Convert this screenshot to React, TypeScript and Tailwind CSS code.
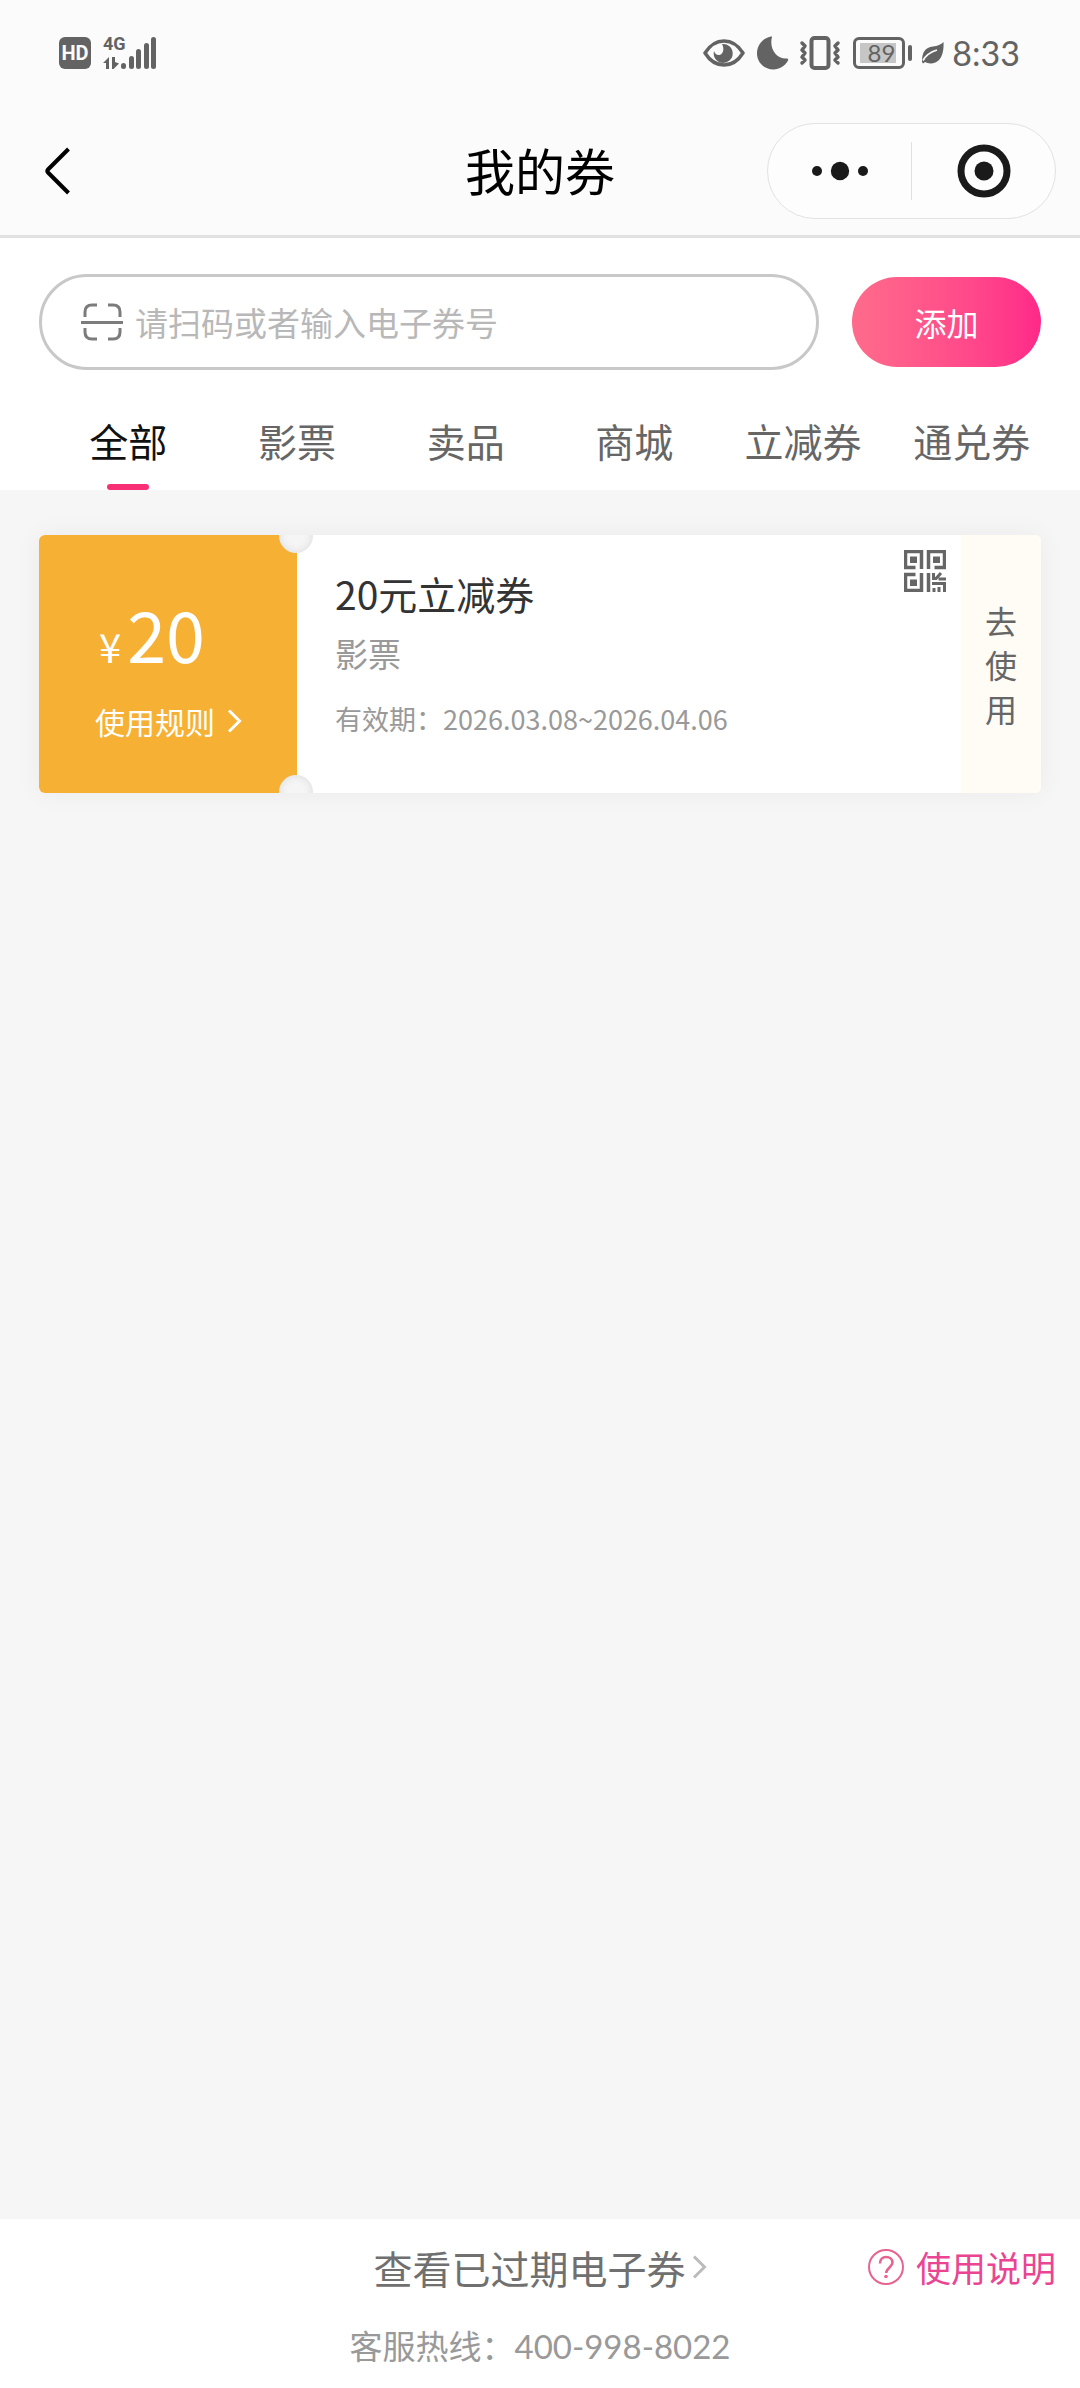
import React, { useState } from "react";

interface Coupon {
  id: number;
  amount: number;
  title: string;
  category: string;
  start: string;
  end: string;
}

const TABS = ["全部", "影票", "卖品", "商城", "立减券", "通兑券"];

const COUPONS: Coupon[] = [
  {
    id: 1,
    amount: 20,
    title: "20元立减券",
    category: "影票",
    start: "2026.03.08",
    end: "2026.04.06",
  },
];

const SignalIcon = () => (
  <svg width="54" height="34" viewBox="0 0 54 34" fill="#636363">
    <path d="M0 27 6 21v12H3v-6zM9 21h3v5l4 1.500-5.500 5.500H9z" />
    <rect x="18" y="27" width="5" height="6" rx="2.500" />
    <rect x="26" y="20" width="5" height="13" rx="2.500" />
    <rect x="33" y="13" width="5" height="20" rx="2.500" />
    <rect x="41" y="7" width="5" height="26" rx="2.500" />
    <rect x="48" y="1" width="5" height="32" rx="2.500" />
  </svg>
);

const EyeIcon = () => (
  <svg width="42" height="28" viewBox="0 0 42 28" fill="none">
    <path
      d="M2 14C7 6 13.500 2 21 2s14 4 19 12c-5 8-11.500 12-19 12S7 22 2 14z"
      stroke="#636363"
      strokeWidth="3.500"
      strokeLinejoin="round"
    />
    <path
      d="M19 5a9.500 9.500 0 1 1-8 7c1 3 3 4.500 5.500 4 4-.8 5-6.500 2.500-11z"
      fill="#636363"
    />
  </svg>
);

const MoonIcon = () => (
  <svg width="32" height="34" viewBox="0 0 32 34" fill="#636363">
    <path d="M15 1C12 12 19 23 29.500 22.500c1.500 0 2 .8 1.500 2C28 30 22.500 33.500 16.500 33.500 7.500 33.500 0 26.500 0 17.500 0 9 6 2 14 .5c.8-.1 1.200 0 1 .5z" />
  </svg>
);

const VibrateIcon = () => (
  <svg
    width="42"
    height="34"
    viewBox="0 0 42 34"
    fill="none"
    stroke="#636363"
    strokeLinejoin="round"
    strokeLinecap="round"
  >
    <rect x="12.500" y="2" width="17" height="30" rx="3" strokeWidth="4" />
    <path
      d="m3 7 3 3-3 4 3 3-3 4 3 3-3 3M39 7l-3 3 3 4-3 3 3 4-3 3 3 3"
      strokeWidth="3.500"
    />
  </svg>
);

const LeafIcon = () => (
  <svg width="22" height="22" viewBox="0 0 22 22">
    <path
      d="M21.500 0c.5 8-1 21-12.500 21.500-2.500.1-4.500-.8-6-1.500L1 21.500 0 20C0 10 3 5.500 11 4.500 15.500 4 19 2.500 21.500 0z"
      fill="#636363"
    />
    <path
      d="M1 18.500C4 13 8.500 10 15 8"
      stroke="#fbfbfb"
      strokeWidth="1.800"
      fill="none"
    />
  </svg>
);

const ScanIcon = () => (
  <svg
    width="42"
    height="38"
    viewBox="0 0 42 38"
    fill="none"
    stroke="#7c7c7c"
    strokeWidth="3"
  >
    <path d="M4 14V9q0-7 7-7h5M27 2h5q7 0 7 7v5M4 25v4q0 7 7 7h5M27 36h5q7 0 7-7v-4M0 19.500h42" />
  </svg>
);

const QrIcon = () => (
  <svg width="42" height="42" viewBox="0 0 42 42" fill="none">
    <path
      d="M11.500 17.500h-10v-16h16V19M24.500 19V1.500h16v16h-10M11.500 24.500h-10v16h16V23M24.500 23v19"
      stroke="#666"
      strokeWidth="3.500"
    />
    <path
      d="M6 6.500h7v6.500H6zM29 6.500h7v6.500h-7zM6 29.500h7V36H6z"
      fill="#666"
    />
    <path
      d="M29.500 23v5.500h2.500l5-5.500M34.500 29H42M28 33.500h12.500V42M30 38v4M35 37v5"
      stroke="#666"
      strokeWidth="3"
    />
  </svg>
);

const ChevronRight = ({ color }: { color: string }) => (
  <svg width="15" height="24" viewBox="0 0 15 24" fill="none">
    <path d="m2 1.500 10.500 10.500L2 22.500" stroke={color} strokeWidth="3" />
  </svg>
);

const StatusBar = () => (
  <div className="flex h-[106px] items-center justify-between pr-[60px] pl-[59px] text-[#636363]">
    <div className="flex items-center gap-3">
      <span className="flex h-8 w-8 items-center justify-center rounded-md bg-[#636363] font-['Roboto'] text-xl font-bold text-[#fbfbfb]">
        HD
      </span>
      <div className="relative">
        <SignalIcon />
        <span className="absolute top-0 left-0 font-['Roboto'] text-lg leading-4 font-bold">
          4G
        </span>
      </div>
    </div>
    <div className="flex items-center">
      <EyeIcon />
      <span className="ml-3">
        <MoonIcon />
      </span>
      <span className="ml-[10px]">
        <VibrateIcon />
      </span>
      <span className="ml-3 flex items-center gap-[3px]">
        <span className="flex h-8 w-[52px] items-center rounded-md border-3 border-[#636363] px-1">
          <span className="flex h-5 w-9 items-center justify-end bg-[#c6c6c6] pr-px font-['Lato'] text-2xl leading-5">
            89
          </span>
        </span>
        <span className="h-4 w-1 rounded-sm bg-[#636363]" />
      </span>
      <span className="ml-[10px]">
        <LeafIcon />
      </span>
      <span className="ml-2 font-['Lato'] text-[34px] leading-10">8:33</span>
    </div>
  </div>
);

const NavBar = () => (
  <div className="grid h-[129px] grid-cols-[1fr_auto_1fr] items-center px-6">
    <button
      type="button"
      aria-label="返回"
      className="ml-5 justify-self-start"
    >
      <svg width="28" height="48" viewBox="0 0 28 48" fill="none">
        <path
          d="M24.500 2 4 22.500q-1.500 1.500 0 3L24.500 46"
          stroke="#000"
          strokeWidth="4"
        />
      </svg>
    </button>
    <h1 className="pb-1 text-[50px] leading-[60px] text-black">我的券</h1>
    <div className="flex h-24 w-[289px] items-center justify-self-end rounded-full border border-[#e2e2e2] bg-[#fdfdfd]">
      <button
        type="button"
        aria-label="更多"
        className="flex flex-1 items-center justify-center"
      >
        <svg width="58" height="20" viewBox="0 0 58 20" fill="#1a1a1a">
          <circle cx="6" cy="10" r="5" />
          <circle cx="29" cy="10" r="9.200" />
          <circle cx="52" cy="10" r="5" />
        </svg>
      </button>
      <span className="h-[58px] w-px bg-[#e0e0e0]" />
      <button
        type="button"
        aria-label="关闭"
        className="flex flex-1 items-center justify-center"
      >
        <svg width="54" height="54" viewBox="0 0 54 54">
          <circle
            cx="27"
            cy="27"
            r="23"
            fill="none"
            stroke="#1a1a1a"
            strokeWidth="7"
          />
          <circle cx="27" cy="27" r="9.500" fill="#1a1a1a" />
        </svg>
      </button>
    </div>
  </div>
);

const CouponCard = ({ coupon }: { coupon: Coupon }) => (
  <li className="relative flex h-[258px] overflow-hidden rounded-md bg-white shadow-[0_0_28px_rgba(0,0,0,0.05)]">
    <div className="w-[258px] shrink-0 bg-[#f6b134] pt-[62px] pl-14 text-white">
      <div className="flex h-[72px] items-baseline gap-[6px] pl-1">
        <span className="text-[40px] leading-10">¥</span>
        <span className="text-[70px] leading-[72px]">{coupon.amount}</span>
      </div>
      <button
        type="button"
        className="mt-8 flex items-center gap-3 text-[30px] leading-10"
      >
        使用规则
        <ChevronRight color="#fff" />
      </button>
    </div>
    {/* 票券缺口 */}
    <span className="absolute -top-4 left-[240px] h-[34px] w-[34px] rounded-full bg-[#f5f5f5] shadow-[inset_0_0_10px_rgba(0,0,0,0.1)]" />
    <span className="absolute -bottom-4 left-[240px] h-[34px] w-[34px] rounded-full bg-[#f5f5f5] shadow-[inset_0_0_10px_rgba(0,0,0,0.1)]" />

    <div className="flex-1 pt-[30px] pl-[38px]">
      <h2 className="text-[39px] leading-[56px] text-[#333]">
        {coupon.title}
      </h2>
      <p className="mt-2 text-[33px] leading-[48px] text-[#999]">
        {coupon.category}
      </p>
      <p className="mt-[22px] text-[27px] leading-10 text-[#999]">
        有效期：{coupon.start}~{coupon.end}
      </p>
    </div>
    <button
      type="button"
      aria-label="二维码"
      className="mt-[15px] mr-[15px] self-start"
    >
      <QrIcon />
    </button>
    <button
      type="button"
      className="flex w-20 items-center justify-center bg-[#fffcf5] text-[32px] leading-[44px] text-[#666]"
    >
      <span className="w-8 break-all">去使用</span>
    </button>
  </li>
);

const App: React.FC = () => {
  const [activeTab, setActiveTab] = useState(TABS[0]);
  const [code, setCode] = useState("");

  const coupons = COUPONS.filter(
    (c) => activeTab === "全部" || c.category === activeTab
  );

  return (
    <div className="flex min-h-screen flex-col bg-[#f6f6f6] font-['Noto_Sans_CJK_SC',sans-serif]">
      <header className="border-b-3 border-[#e1e1e1] bg-[#fbfbfb]">
        <StatusBar />
        <NavBar />
      </header>

      <section className="bg-white pt-9">
        <form
          className="flex items-center gap-[33px] px-[39px]"
          onSubmit={(e) => e.preventDefault()}
        >
          <label className="flex h-24 flex-1 items-center gap-3 rounded-full border-3 border-[#c8c8c8] pr-8 pl-[39px]">
            <ScanIcon />
            <input
              type="text"
              aria-label="电子券号"
              value={code}
              onChange={(e) => setCode(e.target.value)}
              placeholder="请扫码或者输入电子券号"
              className="h-14 min-w-0 flex-1 bg-transparent text-[33px] text-[#333] outline-none placeholder:text-[#b8b8b8]"
            />
          </label>
          <button
            type="submit"
            className="h-[90px] w-[189px] rounded-full bg-linear-to-r from-[#ff6b8b] to-[#ff2889] text-[32px] text-white"
          >
            添加
          </button>
        </form>

        <nav className="grid grid-cols-6 pr-6 pl-11">
          {TABS.map((tab) => (
            <button
              key={tab}
              type="button"
              onClick={() => setActiveTab(tab)}
              className={`flex flex-col items-center gap-[22px] pt-12 text-[39px] leading-[44px] whitespace-nowrap ${
                tab === activeTab ? "text-[#111]" : "text-[#666]"
              }`}
            >
              {tab}
              <span
                className={`h-[6px] w-[42px] rounded-full ${
                  tab === activeTab ? "bg-[#f92f75]" : "bg-transparent"
                }`}
              />
            </button>
          ))}
        </nav>
      </section>

      <main className="flex-1 px-[39px] pt-[45px]">
        <ul className="space-y-8">
          {coupons.map((c) => (
            <CouponCard key={c.id} coupon={c} />
          ))}
        </ul>
      </main>

      <footer className="bg-white pt-5 pb-[18px]">
        <div className="grid grid-cols-[1fr_auto_1fr] items-center px-6">
          <a
            href="#expired"
            className="col-start-2 flex items-center gap-[6px] text-[39px] leading-[56px] text-[#707070]"
          >
            查看已过期电子券
            <ChevronRight color="#bbb" />
          </a>
          <a
            href="#help"
            className="flex items-center gap-3 justify-self-end text-[35px] leading-[56px] text-[#ea4592]"
          >
            <svg
              width="36"
              height="36"
              viewBox="0 0 36 36"
              fill="none"
              stroke="#e6648f"
            >
              <circle cx="18" cy="18" r="17" strokeWidth="2" />
              <path
                d="M12 14.500c0-4 2.600-6.500 6.200-6.500s6.300 2.300 6.300 5.600c0 4.400-6.300 5.400-6.300 10.400"
                strokeWidth="2.600"
              />
              <circle cx="18" cy="27.500" r="1.800" fill="#e6648f" stroke="none" />
            </svg>
            使用说明
          </a>
        </div>
        <p className="mt-[26px] text-center text-[33px] leading-[48px] text-[#999]">
          客服热线：<span className="font-['Lato']">400-998-8022</span>
        </p>
      </footer>
    </div>
  );
};

export default App;
